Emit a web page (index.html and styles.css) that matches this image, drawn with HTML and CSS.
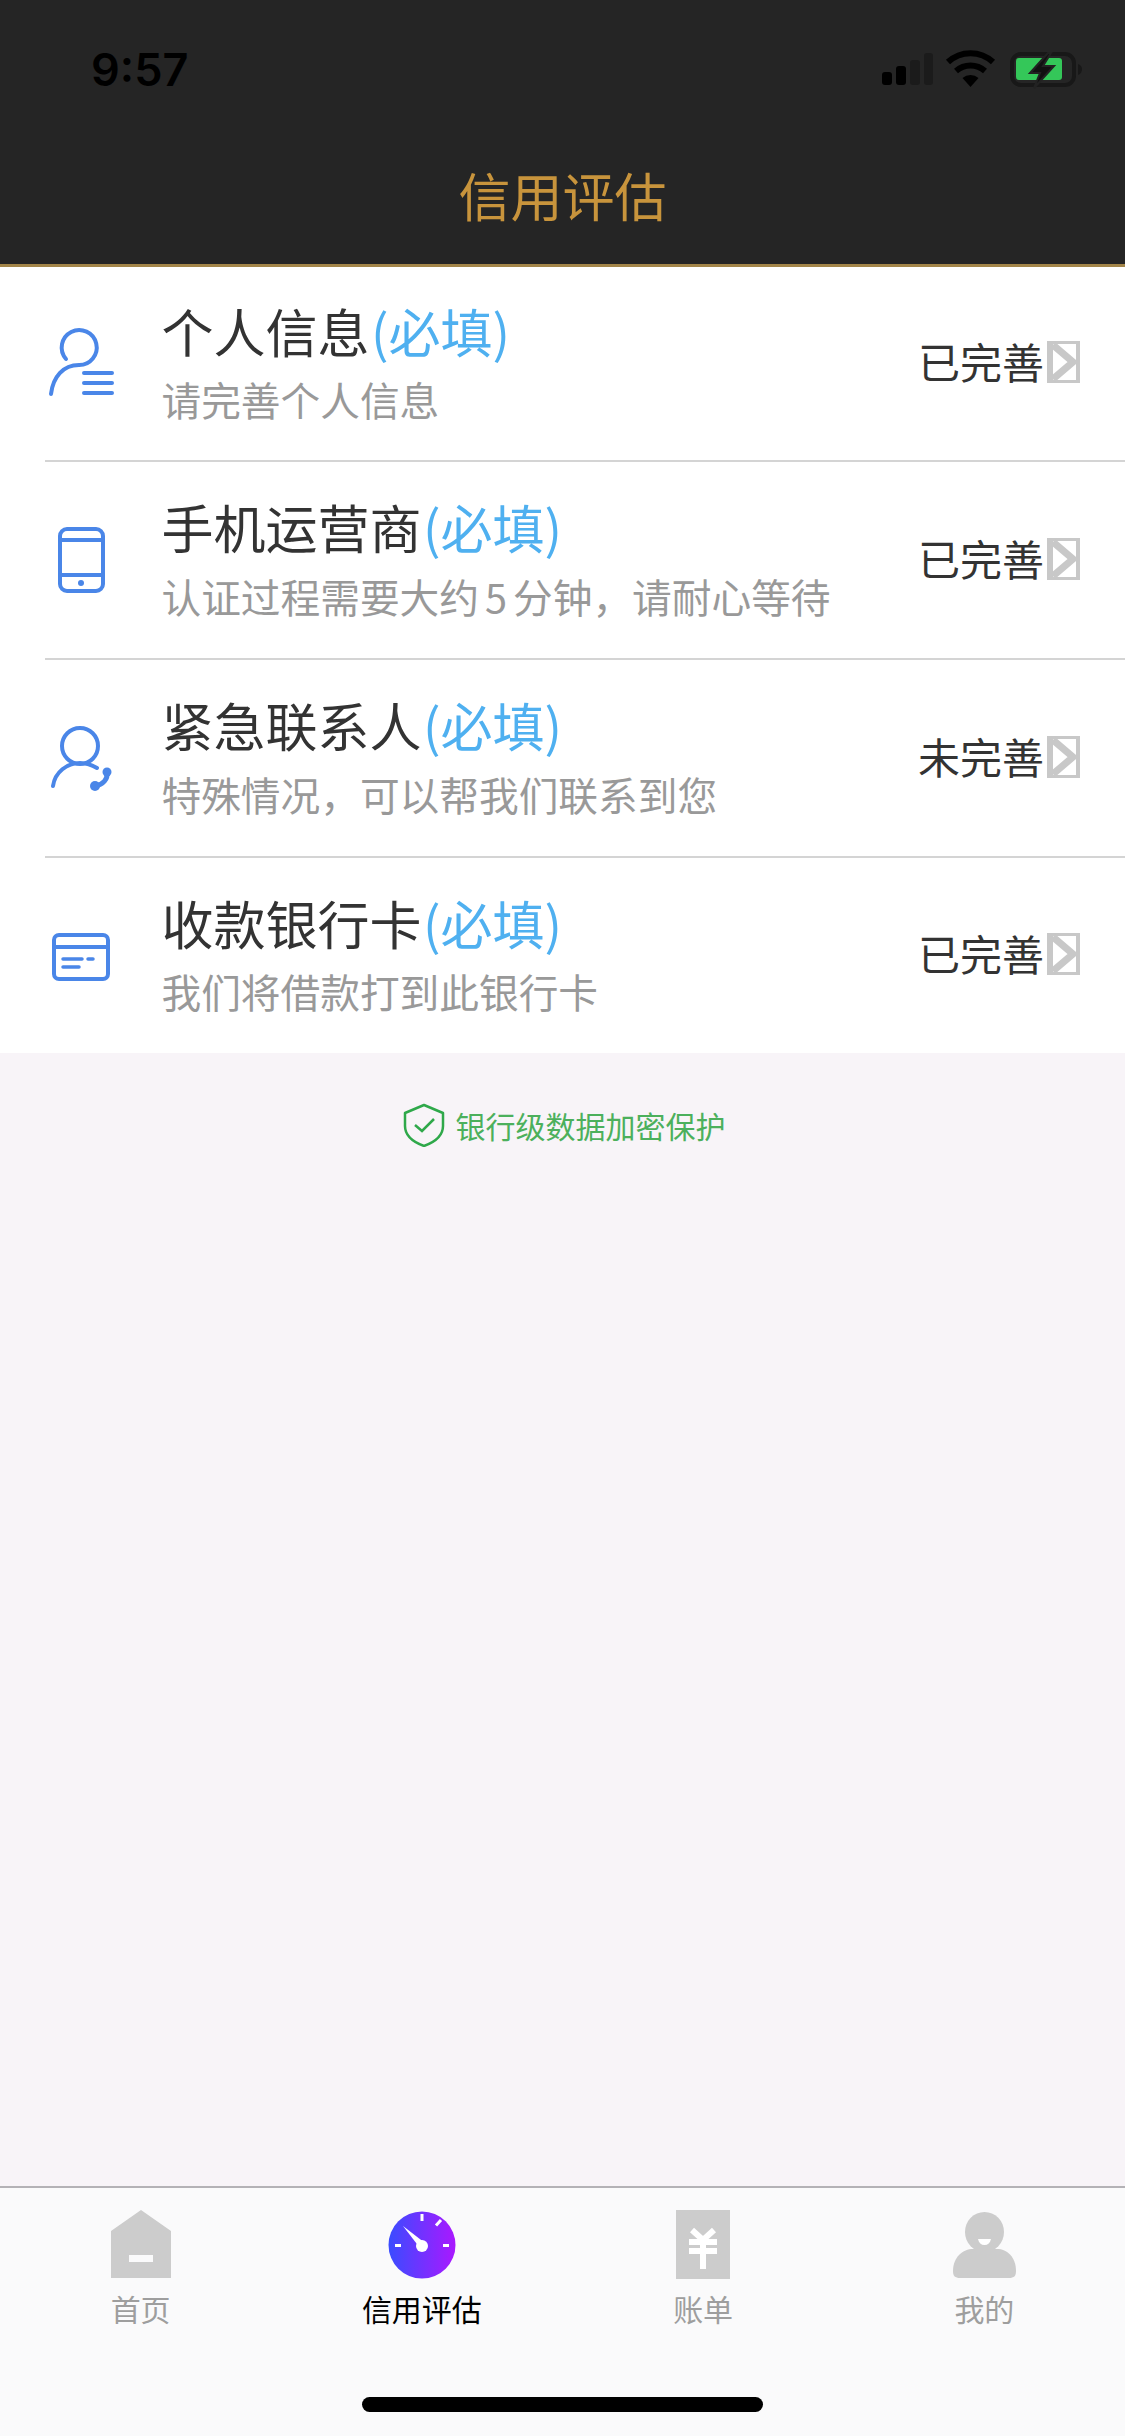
FILE: index.html
```html
<!DOCTYPE html>
<html lang="zh">
<head>
    <meta charset="UTF-8">
    <meta name="viewport" content="width=device-width, initial-scale=1.0">
    <title>信用评估</title>
    <link rel="stylesheet" href="styles.css">
</head>
<body>
    <header class="top">
        <div class="status">
            <span class="time">9:57</span>
            <svg class="status-icons" width="205" height="40" viewBox="877 50 205 40">
                <rect x="882" y="72" width="10" height="13" rx="3" fill="#000"/>
                <rect x="896" y="66" width="10" height="19" rx="3" fill="#000"/>
                <rect x="910" y="60" width="10" height="25" rx="3" fill="#1b1b1b"/>
                <rect x="924" y="53" width="9" height="32" rx="3" fill="#1b1b1b"/>
                <path d="M948 62a33 33 0 0 1 45 0" fill="none" stroke="#000" stroke-width="6"/>
                <path d="M956 71a22 22 0 0 1 29 0" fill="none" stroke="#000" stroke-width="6"/>
                <path d="M970.500 87l-8-9a12 12 0 0 1 16 0z" fill="#000"/>
                <rect x="1012" y="54" width="62" height="31" rx="9" fill="none" stroke="#181818" stroke-width="4"/>
                <path d="M1078 64c3 1 4 3 4 5s-1 5-4 6z" fill="#181818"/>
                <rect x="1016" y="58" width="46" height="22" rx="3" fill="#34c759"/>
                <path d="M1048 53l-18 20h10l-6 15 20-22h-11l8-13z" fill="#111" stroke="#222" stroke-width="2"/>
            </svg>
        </div>
        <h1 class="page-title">信用评估</h1>
    </header>

    <main>
        <ul class="list">
            <li class="row">
                <div class="row-icon">
                    <svg width="80" height="80" viewBox="40 324 80 80">
                        <path d="M66 359a17.500 17.500 0 1 1 13 6c-16 0-26 12-28 29" class="line"/>
                        <path d="M84 373h28M84 383h28M84 393h28" class="line"/>
                    </svg>
                </div>
                <div class="row-text">
                    <div class="row-title">个人信息<span class="must">(必填)</span></div>
                    <div class="row-desc">请完善个人信息</div>
                </div>
                <div class="row-state">已完善</div>
                <svg class="arrow" width="33" height="42" viewBox="0 0 33 42">
                    <rect width="33" height="42" fill="#c8c8c8"/>
                    <rect x="6" y="3" width="23" height="36" fill="#fff"/>
                    <path d="M6 4l20 17-20 17" fill="none" stroke="#c8c8c8" stroke-width="7"/>
                </svg>
            </li>
            <li class="row">
                <div class="row-icon">
                    <svg width="80" height="80" viewBox="40 521 80 80">
                        <rect x="60" y="530" width="43" height="62" rx="7" class="line"/>
                        <path d="M60 541h43M60 576h43" class="line"/>
                        <circle cx="81" cy="584" r="3" fill="#4a86e8"/>
                    </svg>
                </div>
                <div class="row-text">
                    <div class="row-title">手机运营商<span class="must">(必填)</span></div>
                    <div class="row-desc">认证过程需要大约<span class="num">5</span>分钟，请耐心等待</div>
                </div>
                <div class="row-state">已完善</div>
                <svg class="arrow" width="33" height="42" viewBox="0 0 33 42">
                    <rect width="33" height="42" fill="#c8c8c8"/>
                    <rect x="6" y="3" width="23" height="36" fill="#fff"/>
                    <path d="M6 4l20 17-20 17" fill="none" stroke="#c8c8c8" stroke-width="7"/>
                </svg>
            </li>
            <li class="row">
                <div class="row-icon">
                    <svg width="80" height="80" viewBox="40 719 80 80">
                        <circle cx="80" cy="747" r="18" class="line"/>
                        <path d="M53 787c2-14 14-23 27-23 6 0 12 2 17 5" class="line"/>
                        <path d="M107 773c1 7-4 13-12 14" class="line thick"/>
                        <circle cx="95" cy="787" r="5" fill="#4a86e8"/>
                        <circle cx="107" cy="773" r="4.500" fill="#4a86e8"/>
                    </svg>
                </div>
                <div class="row-text">
                    <div class="row-title">紧急联系人<span class="must">(必填)</span></div>
                    <div class="row-desc">特殊情况，可以帮我们联系到您</div>
                </div>
                <div class="row-state">未完善</div>
                <svg class="arrow" width="33" height="42" viewBox="0 0 33 42">
                    <rect width="33" height="42" fill="#c8c8c8"/>
                    <rect x="6" y="3" width="23" height="36" fill="#fff"/>
                    <path d="M6 4l20 17-20 17" fill="none" stroke="#c8c8c8" stroke-width="7"/>
                </svg>
            </li>
            <li class="row">
                <div class="row-icon">
                    <svg width="80" height="80" viewBox="40 916 80 80">
                        <rect x="54" y="935" width="54" height="44" rx="5" class="line"/>
                        <path d="M54 947h54" class="line"/>
                        <path d="M63 959h19M88 959h5M63 967h16" class="line thin"/>
                    </svg>
                </div>
                <div class="row-text">
                    <div class="row-title">收款银行卡<span class="must">(必填)</span></div>
                    <div class="row-desc">我们将借款打到此银行卡</div>
                </div>
                <div class="row-state">已完善</div>
                <svg class="arrow" width="33" height="42" viewBox="0 0 33 42">
                    <rect width="33" height="42" fill="#c8c8c8"/>
                    <rect x="6" y="3" width="23" height="36" fill="#fff"/>
                    <path d="M6 4l20 17-20 17" fill="none" stroke="#c8c8c8" stroke-width="7"/>
                </svg>
            </li>
        </ul>

        <p class="secure">
            <svg width="42" height="44" viewBox="402 1103 42 44">
                <path d="M423 1105l19 8v13c0 9-8 16-19 20-11-4-19-11-19-20v-13z" fill="none" stroke="#2fa84a" stroke-width="2.500" stroke-linejoin="round"/>
                <path d="M414 1125l7 6 12-12" fill="none" stroke="#2fa84a" stroke-width="2.500"/>
            </svg>
            银行级数据加密保护
        </p>
    </main>

    <nav class="tabs">
        <a class="tab">
            <svg width="70" height="70" viewBox="106 2208 70 70">
                <path fill-rule="evenodd" d="M141 2209l30 21v47h-60v-47zM129 2254v7h24v-7z" fill="#ccc"/>
            </svg>
            <span>首页</span>
        </a>
        <a class="tab current">
            <svg width="70" height="70" viewBox="387 2208 70 70">
                <defs>
                    <linearGradient id="dial">
                        <stop offset="0" stop-color="#3a4cff"/>
                        <stop offset="1" stop-color="#aa18ff"/>
                    </linearGradient>
                </defs>
                <circle cx="422" cy="2244" r="33.500" fill="url(#dial)"/>
                <path d="M422 2218v7M441 2224l-5 5.500M395 2249.500h6M443 2249.500h6" transform="translate(0 -5)" stroke="#fff" stroke-width="3" fill="none"/>
                <path d="M403 2225l22 17-5 5z" fill="#fff"/>
                <circle cx="422" cy="2245" r="6" fill="#fff"/>
            </svg>
            <span>信用评估</span>
        </a>
        <a class="tab">
            <svg width="70" height="70" viewBox="668 2208 70 70">
                <path fill-rule="evenodd" d="M676 2209h54v69h-54z" fill="#ccc"/>
                <path d="M692 2229l11 10 11-10M689 2241h28M689 2250h28M703 2238v30" fill="none" stroke="#fff" stroke-width="6"/>
            </svg>
            <span>账单</span>
        </a>
        <a class="tab">
            <svg width="70" height="70" viewBox="948 2208 70 70">
                <ellipse cx="983.500" cy="2231" rx="19.500" ry="20" fill="#ccc"/>
                <path d="M952 2270c0-14 10-22 20-22h24c10 0 19 8 19 22 0 5-2 7-7 7h-49c-5 0-7-2-7-7z" fill="#ccc"/>
                <path d="M977 2238h13c-1 4-3 6-6.500 6s-5.500-2-6.500-6z" fill="#fff"/>
            </svg>
            <span>我的</span>
        </a>
        <div class="home-bar"></div>
    </nav>
</body>
</html>
```

FILE: styles.css
```css
* { margin: 0; padding: 0; box-sizing: border-box; }

body {
    width: 1125px;
    height: 2436px;
    overflow: hidden;
    display: flex;
    flex-direction: column;
    background: #f8f4f8;
    font-family: "Noto Sans CJK SC", "Noto Sans", sans-serif;
}

/* Header */
.top {
    height: 267px;
    background: #252525;
    border-bottom: 3px solid #a38549;
}

.status {
    height: 157px;
    display: flex;
    justify-content: space-between;
    padding: 50px 43px 0 91px;
}

.time {
    font-family: Inter, sans-serif;
    font-size: 45px;
    font-weight: 600;
    line-height: 40px;
    color: #000;
}

.page-title {
    font-size: 52px;
    font-weight: 400;
    line-height: 76px;
    text-align: center;
    color: #c8943c;
}

/* Liste */
main { flex: 1; }

.list {
    list-style: none;
    background: #fff;
    padding-left: 45px;
}

.row {
    height: 198px;
    display: flex;
    align-items: center;
    border-bottom: 2px solid #d4d4d4;
    padding-right: 45px;
}

.row:first-child { height: 195px; }

.row:last-child {
    height: 195px;
    border-bottom: none;
}

.row-icon {
    width: 118px;
    margin-left: -5px;
    margin-right: 3.500px;
}

.row-icon svg { display: block; }

.line {
    fill: none;
    stroke: #4a86e8;
    stroke-width: 4;
    stroke-linecap: round;
}

.thin { stroke-width: 3.500; }
.thick { stroke-width: 5; }

.row-text {
    flex: 1;
    padding-bottom: 5.500px;
}

.row-title {
    font-size: 52px;
    line-height: 72px;
    margin-bottom: 4.500px;
    color: #333;
}

.must {
    margin-left: 1.500px;
    color: #4fb0f0;
}

.row-desc {
    font-size: 39.700px;
    line-height: 56px;
    color: #999;
}

.num { margin: 0 6px; }

.row-state {
    font-size: 42px;
    padding-bottom: 6px;
    color: #333;
}

.arrow {
    display: block;
    margin-left: 3px;
    margin-bottom: 3px;
}

.secure {
    display: flex;
    align-items: center;
    justify-content: center;
    gap: 11px;
    margin-top: 50px;
    font-size: 30px;
    color: #4cb05c;
}

.secure svg { margin-left: 3px; }

/* Onglets */
.tabs {
    position: relative;
    height: 250px;
    display: grid;
    grid-template-columns: repeat(4, 1fr);
    padding-top: 21px;
    background: #fafafb;
    border-top: 2px solid #b4b2b6;
}

.tab {
    display: flex;
    flex-direction: column;
    align-items: center;
    gap: 7px;
    font-size: 30px;
    line-height: 44px;
    color: #9e9e9e;
}

.tab svg { display: block; }

.tab.current { color: #000; }

.home-bar {
    position: absolute;
    left: 362px;
    top: 209px;
    width: 401px;
    height: 15px;
    border-radius: 8px;
    background: #000;
}
```
